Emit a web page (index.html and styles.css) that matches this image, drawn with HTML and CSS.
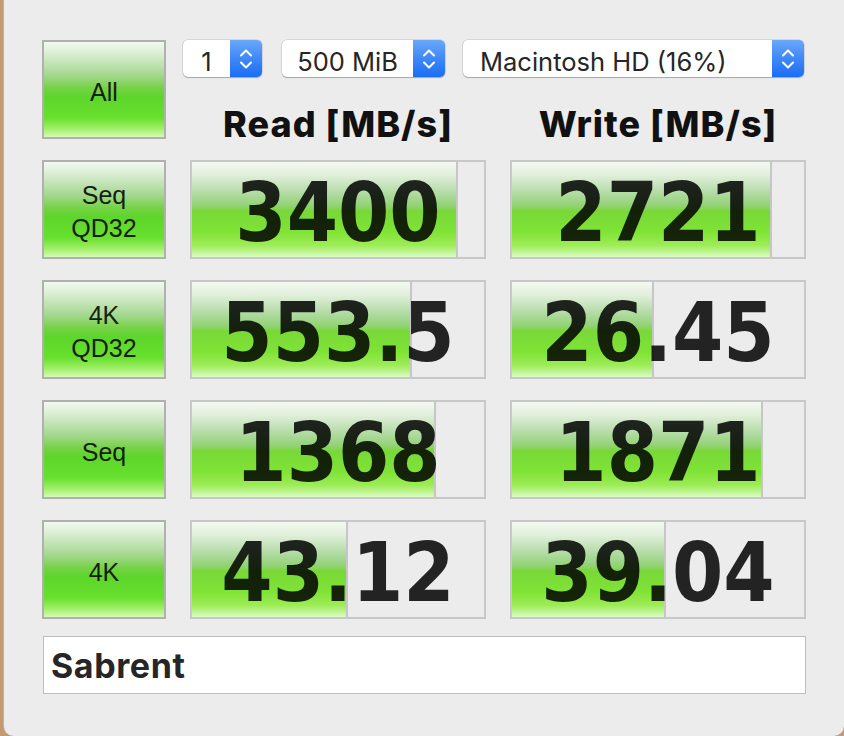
FILE: index.html
```html
<!DOCTYPE html>
<html lang="en">
<head>
    <meta charset="UTF-8">
    <meta name="viewport" content="width=device-width, initial-scale=1.0">
    <title>AmorphousDiskMark</title>
    <link rel="stylesheet" href="styles.css">
</head>
<body>
    <div class="window">
        <div class="bench">
            <div class="btn btn-all">All</div>

            <div class="top">
                <div class="select-row">
                    <div class="select select-count">
                        <span class="select-value">1</span>
                        <span class="select-arrows">
                            <svg width="14" height="22" viewBox="0 0 14 22"><path d="M2 7.5 L7 2.5 L12 7.5 M2 14.5 L7 19.5 L12 14.5" fill="none" stroke="#fff" stroke-width="2" stroke-linecap="round" stroke-linejoin="round"/></svg>
                        </span>
                    </div>
                    <div class="select select-size">
                        <span class="select-value">500 MiB</span>
                        <span class="select-arrows">
                            <svg width="14" height="22" viewBox="0 0 14 22"><path d="M2 7.5 L7 2.5 L12 7.5 M2 14.5 L7 19.5 L12 14.5" fill="none" stroke="#fff" stroke-width="2" stroke-linecap="round" stroke-linejoin="round"/></svg>
                        </span>
                    </div>
                    <div class="select select-disk">
                        <span class="select-value left">Macintosh HD (16%)</span>
                        <span class="select-arrows">
                            <svg width="14" height="22" viewBox="0 0 14 22"><path d="M2 7.5 L7 2.5 L12 7.5 M2 14.5 L7 19.5 L12 14.5" fill="none" stroke="#fff" stroke-width="2" stroke-linecap="round" stroke-linejoin="round"/></svg>
                        </span>
                    </div>
                </div>
                <div class="heads">
                    <div class="head">Read [MB/s]</div>
                    <div class="head">Write [MB/s]</div>
                </div>
            </div>

            <!-- Seq QD32 -->
            <div class="btn">Seq<br>QD32</div>
            <div class="cell"><div class="bar" style="width: 91%"></div><span class="num">3400</span></div>
            <div class="cell"><div class="bar" style="width: 89%"></div><span class="num">2721</span></div>

            <!-- 4K QD32 -->
            <div class="btn">4K<br>QD32</div>
            <div class="cell"><div class="bar" style="width: 75.5%"></div><span class="num">553.5</span></div>
            <div class="cell"><div class="bar" style="width: 48.8%"></div><span class="num">26.45</span></div>

            <!-- Seq -->
            <div class="btn">Seq</div>
            <div class="cell"><div class="bar" style="width: 83.5%"></div><span class="num">1368</span></div>
            <div class="cell"><div class="bar" style="width: 85.8%"></div><span class="num">1871</span></div>

            <!-- 4K -->
            <div class="btn">4K</div>
            <div class="cell"><div class="bar" style="width: 53.4%"></div><span class="num">43.12</span></div>
            <div class="cell"><div class="bar" style="width: 52.6%"></div><span class="num">39.04</span></div>
        </div>

        <div class="comment">Sabrent</div>
    </div>
</body>
</html>
```

FILE: styles.css
```css
html, body {
    margin: 0;
    padding: 0;
}
body {
    background: #c39a72;
    font-family: Inter, "Liberation Sans", Arial, sans-serif;
    color: #222;
}
.window {
    margin-left: 3px;
    height: 736px;
    box-sizing: border-box;
    background: #ececec;
    border-left: 1px solid #b8b0aa;
    border-radius: 0 0 10px 10px;
    padding: 40px 0 0 38px;
}
.bench {
    display: grid;
    grid-template-columns: 124px 296px 296px;
    grid-auto-rows: 99px;
    column-gap: 24px;
    row-gap: 21px;
}
.btn {
    box-sizing: border-box;
    border: 2px solid #b0b0b0;
    background: linear-gradient(to bottom, #f2faf0 0%, #d6ecce 14%, #a6d892 34%, #78d248 48%, #5cd62a 58%, #68e02e 80%, #a4f06c 92%, #d8fcb8 100%);
    display: flex;
    align-items: center;
    justify-content: center;
    text-align: center;
    padding-top: 5px;
    font-family: "Liberation Sans", Arial, sans-serif;
    font-size: 25px;
    line-height: 33px;
    color: #151f10;
}
.top {
    grid-column: 2 / 4;
    display: flex;
    flex-direction: column;
}
.select-row {
    display: flex;
    margin-left: -7px;
    height: 39px;
}
.select {
    display: flex;
    background: #fff;
    border-radius: 5px;
    box-shadow: 0 0 0 0.5px rgba(0,0,0,0.18), 0 1px 1px rgba(0,0,0,0.22);
    font-size: 25.5px;
    color: #262626;
    overflow: hidden;
}
.select-count {
    width: 79px;
}
.select-size {
    width: 163px;
    margin-left: 20px;
}
.select-disk {
    width: 341px;
    margin-left: 18px;
}
.select-value {
    flex: 1;
    display: flex;
    align-items: center;
    justify-content: center;
    padding-top: 6px;
}
.select-value.left {
    justify-content: flex-start;
    padding-left: 17px;
}
.select-arrows {
    width: 32px;
    display: flex;
    align-items: center;
    justify-content: center;
    background: linear-gradient(to bottom, #6aa8fa 0%, #3f88f8 50%, #1a6ef6 100%);
}
.heads {
    flex: 1;
    display: grid;
    grid-template-columns: 296px 296px;
    column-gap: 24px;
}
.head {
    text-align: center;
    font-weight: 800;
    font-size: 36px;
    letter-spacing: 1px;
    color: #111;
    padding-top: 25px;
}
.cell {
    position: relative;
    box-sizing: border-box;
    border: 2px solid #c8c8c8;
    background: #ececec;
    display: flex;
    align-items: center;
    justify-content: center;
    overflow: hidden;
}
.bar {
    position: absolute;
    left: 0;
    top: 0;
    bottom: 0;
    box-sizing: border-box;
    border-right: 2px solid #c6c6c6;
    background: linear-gradient(to bottom, #f4f9f2 0%, #e0efda 14%, #b4dca6 32%, #92d274 46%, #78d836 52%, #80e436 74%, #9eec58 88%, #dafcc6 100%);
}
.num {
    position: relative;
    font-family: "DejaVu Sans Condensed", "DejaVu Sans", sans-serif;
    font-weight: bold;
    font-size: 82px;
    line-height: 1;
    color: rgba(0, 0, 0, 0.85);
    margin-top: 6px;
}
.comment {
    box-sizing: border-box;
    width: 763px;
    height: 58px;
    margin-top: 17px;
    margin-left: 1px;
    background: #fff;
    border: 1px solid #bdbdbd;
    font-weight: 700;
    font-size: 34px;
    letter-spacing: 0.6px;
    color: #262626;
    display: flex;
    align-items: center;
    padding-left: 7px;
}
```
